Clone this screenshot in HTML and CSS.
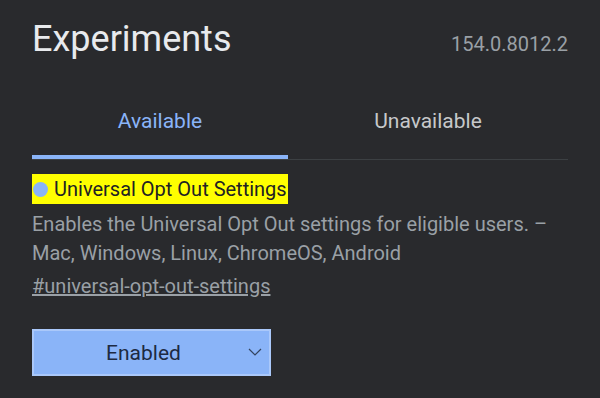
FILE: index.html
```html
<!DOCTYPE html>
<html>
  <head>
    <title>Experiments</title>
    <link rel="stylesheet" href="styles.css">
  </head>
  <body>
    <div class="page">
      <div class="header">
        <h1>Experiments</h1>
        <span class="version">154.0.8012.2</span>
      </div>
      <div class="tabs">
        <div class="tab tab-active">Available</div>
        <div class="tab tab-other">Unavailable</div>
      </div>
      <div class="experiment">
        <h2 class="experiment-name"><span class="dot"></span>Universal Opt Out Settings</h2>
        <p class="experiment-desc">
          Enables the Universal Opt Out settings for eligible users. &ndash;
          Mac, Windows, Linux, ChromeOS, Android
        </p>
        <a class="permalink" href="#universal-opt-out-settings">#universal-opt-out-settings</a>
        <div class="select">
          <span>Enabled</span>
          <svg class="chevron" width="14" height="8" viewBox="0 0 14 8">
            <path d="M1 1 L7 7 L13 1" fill="none" stroke="#34445f" stroke-width="1.2" />
          </svg>
        </div>
      </div>
    </div>
  </body>
</html>
```

FILE: styles.css
```css
body {
  margin: 0;
  background-color: #292a2d;
  font-family: Roboto, "Liberation Sans", sans-serif;
  color: #e8eaed;
}
.page {
  padding: 0 32px;
}
.header {
  display: flex;
  justify-content: space-between;
  align-items: baseline;
  padding-top: 18px;
}
h1 {
  margin: 0;
  font-size: 36px;
  font-weight: 400;
  color: #e8eaed;
}
.version {
  font-size: 20px;
  color: #9aa0a6;
}
.tabs {
  display: flex;
  margin-top: 49px;
  border-bottom: 1px solid #3c4043;
}
.tab {
  text-align: center;
  font-size: 21px;
  padding-bottom: 22px;
  border-bottom: 4px solid transparent;
}
.tab-active {
  width: 256px;
  color: #8ab4f8;
  border-bottom-color: #8ab4f8;
}
.tab-other {
  width: 280px;
  color: #c6c8ca;
}
.experiment {
  padding-top: 14px;
}
.experiment-name {
  display: inline-flex;
  align-items: center;
  margin: 0;
  height: 30px;
  padding-right: 1px;
  background-color: #ffff00;
  color: #202124;
  font-size: 20px;
  font-weight: 400;
}
.dot {
  width: 15px;
  height: 15px;
  margin: 0 6px 0 1px;
  border-radius: 50%;
  background-color: #8ab4f8;
}
.experiment-desc {
  margin: 6px 0 0;
  width: 530px;
  font-size: 20px;
  line-height: 29px;
  color: #9aa0a6;
}
.permalink {
  display: inline-block;
  margin-top: 4px;
  font-size: 20px;
  line-height: 29px;
  color: #9aa0a6;
}
.select {
  display: flex;
  align-items: center;
  justify-content: center;
  position: relative;
  box-sizing: border-box;
  width: 239px;
  height: 47px;
  margin-top: 28px;
  padding-right: 16px;
  background-color: #8ab4f8;
  border: 2px solid #aac8fa;
  color: #1d2a42;
  font-size: 21px;
}
.chevron {
  position: absolute;
  right: 7px;
  top: 17px;
}
```
